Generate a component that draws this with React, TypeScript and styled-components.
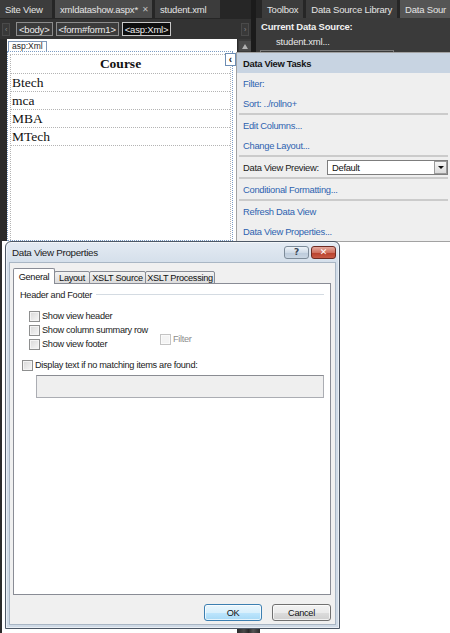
import React from "react";
import styled, { createGlobalStyle } from "styled-components";

const UI = `"Liberation Sans", Arial, sans-serif`;
const SERIF = `"Liberation Serif", "Times New Roman", serif`;

const GlobalStyle = createGlobalStyle`
  html, body { margin: 0; padding: 0; background: #ffffff; }
  body { font-family: ${UI}; }
  * { box-sizing: border-box; }
`;

const Desktop = styled.div`
  position: relative;
  width: 450px;
  height: 633px;
  overflow: hidden;
  background: #ffffff;
  font-family: ${UI};
`;

/* ---------- code editor window ---------- */
const EditorWindow = styled.section`
  position: absolute;
  left: 0;
  top: 0;
  width: 252px;
  height: 241px;
  background: #2b2b2b;
  display: flex;
  flex-direction: column;
  font-size: 9.5px;
  letter-spacing: -0.2px;
`;

const DocTabs = styled.div`
  display: flex;
  height: 19px;
  gap: 3px;
  align-items: flex-start;
  background: #262626;
`;

const DocTab = styled.div<{ $w: number; $active?: boolean }>`
  width: ${(p) => p.$w}px;
  height: 18px;
  padding-left: 5px;
  display: flex;
  align-items: center;
  gap: 4px;
  background: ${(p) => (p.$active ? "#4c4c4c" : "#3c3c3c")};
  color: #e4e4e4;
  white-space: nowrap;
`;

const TabClose = styled.span`
  color: #bdbdbd;
  font-size: 8px;
`;

const Crumbs = styled.div`
  height: 20px;
  display: flex;
  align-items: center;
  gap: 3px;
  padding: 0 3px 0 2px;
  background: #333333;
`;

const Nub = styled.div<{ $end?: boolean }>`
  width: 8px;
  height: 13px;
  margin: ${(p) => (p.$end ? "0 0 0 auto" : "0 3px 0 0")};
  background: #393939;
  border: 1px solid #4a4a4a;
  display: flex;
  align-items: center;
  justify-content: center;
  color: #8a8a8a;
  font-size: 7px;
`;

const Crumb = styled.div<{ $sel?: boolean }>`
  height: 14px;
  padding: 0 2px;
  display: flex;
  align-items: center;
  border: 1px solid ${(p) => (p.$sel ? "#c8c8c8" : "#8c8c8c")};
  background: ${(p) => (p.$sel ? "#0e0e0e" : "#3b3b3b")};
  color: #ececec;
  white-space: nowrap;
`;

const EditorBody = styled.div`
  flex: 1;
  display: flex;
  padding-left: 7px;
  min-height: 0;
`;

const Surface = styled.div`
  flex: 1;
  background: #ffffff;
  padding: 2px 4px 0 0;
  display: flex;
  flex-direction: column;
  overflow: hidden;
  letter-spacing: 0;
`;

const ControlTag = styled.div`
  align-self: flex-start;
  margin-left: 1px;
  height: 10px;
  padding: 0 3px;
  border: 1px solid #7f98b8;
  border-bottom: none;
  font-size: 8.5px;
  line-height: 9px;
  color: #222;
  background: #fff;
`;

const ControlBox = styled.div`
  flex: 1;
  border: 1px dotted #7c9cc4;
  padding: 2px 1px 0 2px;
  display: flex;
`;

const DataGrid = styled.div`
  flex: 1;
  border-left: 1px dotted #b4b4b4;
  border-right: 1px dotted #b4b4b4;
  border-top: 1px dotted #b4b4b4;
  font-family: ${SERIF};
  color: #111;
`;

const HeadCell = styled.div`
  height: 19px;
  display: flex;
  align-items: center;
  justify-content: center;
  font-weight: bold;
  font-size: 13.5px;
  border-bottom: 1px dotted #b4b4b4;
`;

const Cell = styled.div`
  height: 18px;
  display: flex;
  align-items: center;
  padding-left: 1px;
  font-size: 13.5px;
  border-bottom: 1px dotted #b4b4b4;
`;

const VScroll = styled.div`
  width: 15px;
  background: #3a3a3a;
  border-left: 1px solid #2a2a2a;
  display: flex;
  flex-direction: column;
  align-items: center;
  padding-top: 2px;
`;

const ScrollUp = styled.div`
  width: 12px;
  height: 10px;
  background: #4a4a4a;
  display: flex;
  align-items: center;
  justify-content: center;
  &::after {
    content: "";
    border-left: 3px solid transparent;
    border-right: 3px solid transparent;
    border-bottom: 5px solid #b0b0b0;
  }
`;

const SmartTag = styled.div`
  position: absolute;
  left: 225px;
  top: 53px;
  width: 11px;
  height: 13px;
  background: #ffffff;
  border: 1px solid #6d8db3;
  display: flex;
  align-items: center;
  justify-content: center;
  font-family: ${UI};
  font-size: 10px;
  font-weight: bold;
  color: #222;
`;

/* ---------- data source pane ---------- */
const SourcePane = styled.section`
  position: absolute;
  left: 251px;
  top: 0;
  width: 199px;
  height: 53px;
  background: #262626;
  border-left: 5px solid #1b1b1b;
  display: flex;
  flex-direction: column;
  font-size: 9.5px;
  letter-spacing: -0.2px;
  overflow: hidden;
`;

const PaneTabs = styled.div`
  display: flex;
  height: 18px;
  gap: 3px;
  padding-left: 6px;
`;

const PaneTab = styled.div<{ $active?: boolean }>`
  height: 18px;
  padding: 0 5px;
  display: flex;
  align-items: center;
  background: ${(p) => (p.$active ? "#555555" : "#3c3c3c")};
  color: #e4e4e4;
  white-space: nowrap;
  flex: none;
`;

const PaneBody = styled.div`
  flex: 1;
  background: #3a3a3a;
  padding: 1px 0 0 5px;
  color: #f2f2f2;
  display: flex;
  flex-direction: column;
`;

const PaneHeading = styled.div`
  height: 15px;
  display: flex;
  align-items: center;
  font-weight: bold;
`;

const PaneValue = styled.div`
  height: 15px;
  display: flex;
  align-items: center;
  padding-left: 15px;
  color: #e8e8e8;
`;

const PaneBox = styled.div`
  margin: 1px 0 0 -1px;
  width: 134px;
  flex: 1;
  border: 1px solid #7a7a7a;
  border-bottom: none;
`;

/* ---------- smart-tag task panel ---------- */
const TasksPanel = styled.aside`
  position: absolute;
  left: 236px;
  top: 52px;
  width: 214px;
  background: #efefef;
  border: 1px solid #a2a2a2;
  border-right: none;
  font-size: 9.4px;
  letter-spacing: -0.3px;
`;

const TasksHeader = styled.div`
  height: 20px;
  background: #c8d4e2;
  padding-left: 6px;
  display: flex;
  align-items: center;
  font-weight: bold;
  color: #151515;
`;

const TaskGroup = styled.div`
  padding-left: 6px;
`;

const TaskLink = styled.div`
  height: 20px;
  display: flex;
  align-items: center;
  color: #2e63b0;
`;

const TaskRule = styled.div`
  height: 2px;
  margin: 0 2px;
  background: #cbcbcb;
`;

const PreviewRow = styled.div`
  height: 20px;
  display: flex;
  align-items: center;
  color: #1a1a1a;
  white-space: nowrap;
`;

const Select = styled.div`
  margin: 0 2px 0 auto;
  width: 121px;
  height: 15px;
  border: 1px solid #7d7d7d;
  background: #ffffff;
  display: flex;
  align-items: center;
  padding-left: 4px;
  color: #111;
`;

const SelectButton = styled.div`
  margin-left: auto;
  width: 13px;
  height: 13px;
  border: 1px solid #9a9a9a;
  background: linear-gradient(#f6f6f6, #dadada);
  display: flex;
  align-items: center;
  justify-content: center;
  &::after {
    content: "";
    border-left: 3px solid transparent;
    border-right: 3px solid transparent;
    border-top: 3px solid #111;
  }
`;

/* ---------- properties dialog ---------- */
const Dialog = styled.section`
  position: absolute;
  left: 5px;
  top: 241px;
  width: 335px;
  height: 388px;
  border: 1px solid #4d5866;
  border-radius: 6px 6px 0 0;
  background: linear-gradient(#e4ebf3, #d2dde9 24px, #cfdae6);
  box-shadow: inset 0 0 0 1px rgba(255, 255, 255, 0.55);
  padding: 0 3px 3px 3px;
  display: flex;
  flex-direction: column;
  font-size: 9.2px;
  letter-spacing: -0.3px;
  color: #111;
`;

const TitleBar = styled.div`
  height: 21px;
  display: flex;
  align-items: center;
  gap: 2px;
  padding-left: 3px;
`;

const Title = styled.div`
  flex: 1;
  color: #1b1b1b;
  font-size: 9.8px;
`;

const CaptionButton = styled.div<{ $close?: boolean }>`
  width: 25px;
  height: 13px;
  border-radius: 3px;
  border: 1px solid ${(p) => (p.$close ? "#6e2b22" : "#7d8b99")};
  background: ${(p) =>
    p.$close
      ? "linear-gradient(#e4a99d, #d0715f 50%, #b8402c 51%, #c85a45)"
      : "linear-gradient(#eef3f8, #cfdbe7 50%, #bccadb 51%, #c9d6e3)"};
  display: flex;
  align-items: center;
  justify-content: center;
  color: ${(p) => (p.$close ? "#ffffff" : "#3c4a58")};
  font-family: "DejaVu Sans", sans-serif;
  font-weight: bold;
  font-size: 9px;
  line-height: 1;
  letter-spacing: 0;
`;

const DialogBody = styled.div`
  flex: 1;
  background: #f0f0f0;
  border: 1px solid #a9b6c4;
  padding: 5px 4px 3px 3px;
  display: flex;
  flex-direction: column;
`;

const TabRow = styled.div`
  display: flex;
  align-items: flex-end;
  height: 16px;
  margin-bottom: -1px;
  position: relative;
  z-index: 1;
`;

const DialogTab = styled.div<{ $w: number; $active?: boolean }>`
  width: ${(p) => p.$w}px;
  height: ${(p) => (p.$active ? 16 : 13)}px;
  margin-left: ${(p) => (p.$active ? 0 : -1)}px;
  border: 1px solid #898c95;
  border-bottom: ${(p) => (p.$active ? "none" : "1px solid #898c95")};
  border-radius: 2px 2px 0 0;
  background: ${(p) => (p.$active ? "#ffffff" : "linear-gradient(#f3f3f3, #dcdcdc)")};
  display: flex;
  align-items: center;
  justify-content: center;
  white-space: nowrap;
  &:first-child {
    margin-left: 0;
  }
`;

const TabPanel = styled.div`
  height: 312px;
  background: #ffffff;
  border: 1px solid #898c95;
  padding: 4px 6px 0 6px;
  display: flex;
  flex-direction: column;
`;

const Legend = styled.div`
  height: 13px;
  display: flex;
  align-items: center;
  gap: 4px;
  color: #1a1a1a;
  white-space: nowrap;
`;

const LegendRule = styled.div`
  flex: 1;
  height: 1px;
  background: #d4dbe2;
`;

const OptionGrid = styled.div`
  margin: 8px 0 0 9px;
  display: grid;
  grid-template-columns: 131px auto;
  grid-auto-rows: 14px;
`;

const Option = styled.label<{ $disabled?: boolean; $span?: boolean }>`
  display: flex;
  align-items: center;
  gap: 2px;
  color: ${(p) => (p.$disabled ? "#8d8d8d" : "#1a1a1a")};
  white-space: nowrap;
  ${(p) =>
    p.$span
      ? "grid-column: 2; grid-row: 2 / span 2; align-self: end; margin-bottom: 5px; height: 14px;"
      : "grid-column: 1;"}
`;

const Box = styled.span<{ $disabled?: boolean }>`
  width: 11px;
  height: 11px;
  flex: none;
  border: 1px solid ${(p) => (p.$disabled ? "#c4c4c4" : "#8e8f8f")};
  background: ${(p) =>
    p.$disabled ? "#f4f4f4" : "linear-gradient(135deg, #d8d8d8, #f7f7f7)"};
  box-shadow: inset 0 0 0 1px ${(p) => (p.$disabled ? "#fafafa" : "#f4f4f4")};
`;

const EmptyOption = styled(Option)`
  margin: 7px 0 0 2px;
  height: 14px;
`;

const EmptyText = styled.div`
  margin: 3px 0 0 16px;
  height: 23px;
  background: #efefef;
  border: 1px solid #abadb3;
  border-top-color: #8a8c92;
`;

const ButtonRow = styled.div`
  margin-top: 9px;
  display: flex;
  justify-content: flex-end;
  gap: 10px;
`;

const PushButton = styled.div<{ $w: number; $focus?: boolean }>`
  width: ${(p) => p.$w}px;
  height: 17px;
  border-radius: 3px;
  border: 1px solid ${(p) => (p.$focus ? "#3c7fb1" : "#707070")};
  background: ${(p) =>
    p.$focus
      ? "linear-gradient(#eaf6fd, #d9f0fc 50%, #bee6fd 51%, #a7d9f5)"
      : "linear-gradient(#f2f2f2, #ebebeb 50%, #dddddd 51%, #cfcfcf)"};
  box-shadow: inset 0 0 0 1px rgba(255, 255, 255, 0.7);
  display: flex;
  align-items: center;
  justify-content: center;
  color: #111;
`;

/* ---------- bits of other windows peeking out ---------- */
const LeftEdge = styled.div`
  position: absolute;
  left: 0;
  top: 241px;
  width: 2px;
  height: 392px;
  background: #2b2b2b;
`;

const DockStub = styled.div`
  position: absolute;
  left: 237px;
  top: 629px;
  width: 23px;
  height: 4px;
  background: linear-gradient(90deg, #2a2a2a, #4a4a4a 30%, #2a2a2a 50%, #555 70%, #2a2a2a);
`;

const rows = ["Btech", "mca", "MBA", "MTech"];

export default function App() {
  return (
    <Desktop>
      <GlobalStyle />

      <EditorWindow>
        <DocTabs>
          <DocTab $w={52}>Site View</DocTab>
          <DocTab $w={97} $active>
            xmldatashow.aspx* <TabClose>✕</TabClose>
          </DocTab>
          <DocTab $w={65}>student.xml</DocTab>
        </DocTabs>
        <Crumbs>
          <Nub>‹</Nub>
          <Crumb>&lt;body&gt;</Crumb>
          <Crumb>&lt;form#form1&gt;</Crumb>
          <Crumb $sel>&lt;asp:Xml&gt;</Crumb>
          <Nub $end>›</Nub>
        </Crumbs>
        <EditorBody>
          <Surface>
            <ControlTag>asp:Xml</ControlTag>
            <ControlBox>
              <DataGrid>
                <HeadCell>Course</HeadCell>
                {rows.map((r) => (
                  <Cell key={r}>{r}</Cell>
                ))}
              </DataGrid>
            </ControlBox>
          </Surface>
          <VScroll>
            <ScrollUp />
          </VScroll>
        </EditorBody>
      </EditorWindow>

      <SourcePane>
        <PaneTabs>
          <PaneTab>Toolbox</PaneTab>
          <PaneTab>Data Source Library</PaneTab>
          <PaneTab $active>Data Sour</PaneTab>
        </PaneTabs>
        <PaneBody>
          <PaneHeading>Current Data Source:</PaneHeading>
          <PaneValue>student.xml...</PaneValue>
          <PaneBox />
        </PaneBody>
      </SourcePane>

      <SmartTag>‹</SmartTag>

      <TasksPanel>
        <TasksHeader>Data View Tasks</TasksHeader>
        <TaskGroup>
          <TaskLink>Filter:</TaskLink>
          <TaskLink>Sort: ../rollno+</TaskLink>
        </TaskGroup>
        <TaskRule />
        <TaskGroup>
          <TaskLink>Edit Columns...</TaskLink>
          <TaskLink>Change Layout...</TaskLink>
        </TaskGroup>
        <TaskRule />
        <TaskGroup>
          <PreviewRow>
            Data View Preview:
            <Select>
              Default
              <SelectButton />
            </Select>
          </PreviewRow>
        </TaskGroup>
        <TaskRule />
        <TaskGroup>
          <TaskLink>Conditional Formatting...</TaskLink>
        </TaskGroup>
        <TaskRule />
        <TaskGroup>
          <TaskLink>Refresh Data View</TaskLink>
          <TaskLink>Data View Properties...</TaskLink>
        </TaskGroup>
      </TasksPanel>

      <LeftEdge />

      <Dialog>
        <TitleBar>
          <Title>Data View Properties</Title>
          <CaptionButton>?</CaptionButton>
          <CaptionButton $close>✕</CaptionButton>
        </TitleBar>
        <DialogBody>
          <TabRow>
            <DialogTab $w={42} $active>
              General
            </DialogTab>
            <DialogTab $w={36}>Layout</DialogTab>
            <DialogTab $w={57}>XSLT Source</DialogTab>
            <DialogTab $w={70}>XSLT Processing</DialogTab>
          </TabRow>
          <TabPanel>
            <Legend>
              Header and Footer
              <LegendRule />
            </Legend>
            <OptionGrid>
              <Option>
                <Box />
                Show view header
              </Option>
              <Option>
                <Box />
                Show column summary row
              </Option>
              <Option>
                <Box />
                Show view footer
              </Option>
              <Option $span $disabled>
                <Box $disabled />
                Filter
              </Option>
            </OptionGrid>
            <EmptyOption>
              <Box />
              Display text if no matching items are found:
            </EmptyOption>
            <EmptyText />
          </TabPanel>
          <ButtonRow>
            <PushButton $w={58} $focus>
              OK
            </PushButton>
            <PushButton $w={59}>Cancel</PushButton>
          </ButtonRow>
        </DialogBody>
      </Dialog>

      <DockStub />
    </Desktop>
  );
}
